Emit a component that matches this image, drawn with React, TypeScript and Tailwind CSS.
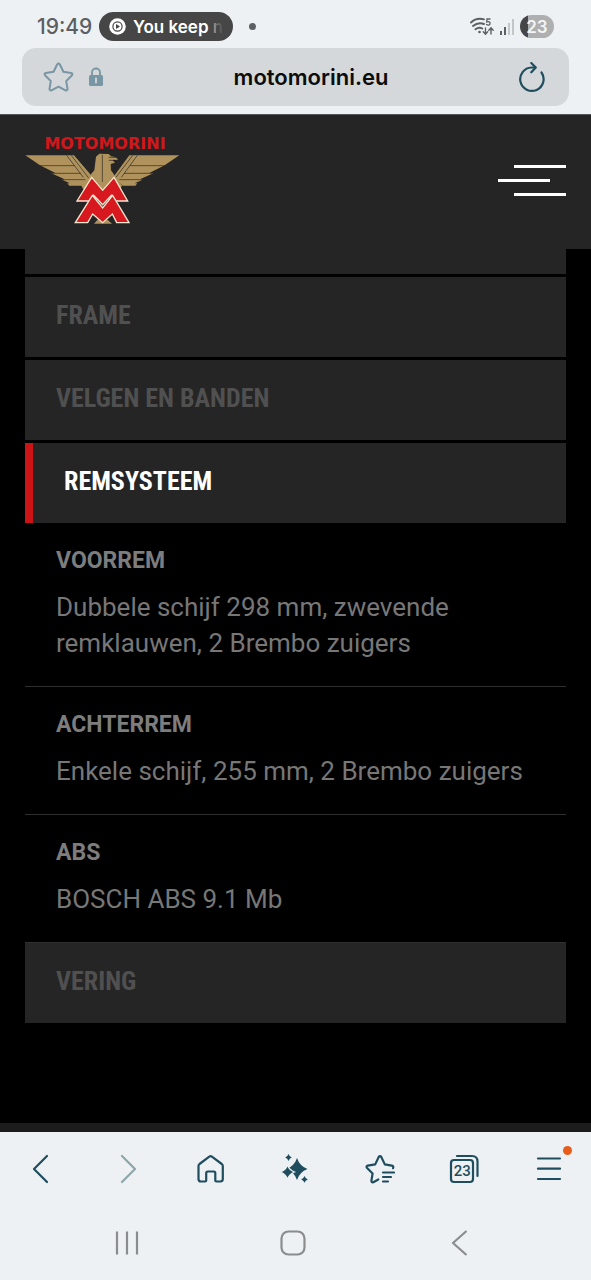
import React, { useState } from 'react';

type Spec = { label: string; value: string };

const BRAKES: Spec[] = [
    { label: 'VOORREM', value: 'Dubbele schijf 298 mm, zwevende remklauwen, 2 Brembo zuigers' },
    { label: 'ACHTERREM', value: 'Enkele schijf, 255 mm, 2 Brembo zuigers' },
    { label: 'ABS', value: 'BOSCH ABS 9.1 Mb' },
];

const SECTIONS: { title: string; specs: Spec[] }[] = [
    { title: 'FRAME', specs: [] },
    { title: 'VELGEN EN BANDEN', specs: [] },
    { title: 'REMSYSTEEM', specs: BRAKES },
    { title: 'VERING', specs: [] },
];

const StatusBar: React.FC = () => (
    <div className="flex h-12 items-center px-[37px] pt-[5px] text-[#5c5f63]">
        <span className="w-[62px] text-[21px] leading-6 font-medium font-['Inter',sans-serif]">19:49</span>
        <div className="flex h-[29px] w-[134px] items-center gap-[7px] rounded-full bg-[#464646] pl-[10px] text-white">
            <svg width="17" height="17" viewBox="0 0 17 17" aria-hidden="true">
                <circle cx="8.5" cy="8.5" r="8.3" fill="#fff" />
                <circle cx="8.5" cy="8.5" r="4.6" fill="none" stroke="#464646" strokeWidth="1.2" />
                <path d="M7 6l4 2.5L7 11z" fill="#464646" />
            </svg>
            <span className="text-[17px] leading-6 font-semibold whitespace-nowrap font-['Inter',sans-serif]">
                You keep <span className="bg-gradient-to-r from-[#999] to-[#4a4a4a] bg-clip-text text-transparent">n</span>
            </span>
        </div>
        <span className="ml-4 h-[7px] w-[7px] rounded-full bg-[#5c5f63]" />
        <div className="ml-auto flex items-center gap-[5px]">
            <svg width="24" height="20" viewBox="0 0 24 20" fill="none" stroke="#5c5f63" strokeLinecap="round" aria-hidden="true">
                <path d="M1 5.5C4 2.500 9 1 14 2.300M3 9c3-2.500 7-3.500 11-2M5.500 12.300c2-1.600 4.500-2 6.800-.8" strokeWidth="1.900" />
                <circle cx="9.500" cy="15" r="1.300" fill="#5c5f63" stroke="none" />
                <path d="M20 2h-3l-.3 3c2-.7 3.600 0 3.400 1.600-.2 1.700-2.300 1.900-3.600.9" strokeWidth="1.300" />
                <path d="M15.500 11v6m-2.200-2.200l2.200 2.400 2.200-2.400M21 17v-6m-2.200 2.200L21 10.800l2.200 2.400" strokeWidth="1.400" />
            </svg>
            <svg width="16" height="17" viewBox="0 0 16 17" aria-hidden="true">
                <path d="M1 13h2v4H1zM5 9h2v8H5z" fill="#5c5f63" />
                <path d="M9 5h2v12H9zM13 1h2v16h-2z" fill="#c3c6c8" />
            </svg>
            <div className="flex h-[23px] w-[34px] items-center justify-center rounded-full bg-gradient-to-r from-[#464646] from-23% to-[#adafb0] to-23% text-[17px] leading-5 font-semibold text-[#f2f4f5] font-['Inter',sans-serif]">
                23
            </div>
        </div>
    </div>
);

const AddressBar: React.FC = () => (
    <div className="mx-[22px] flex h-[58px] items-center rounded-[14px] bg-[#d4d8db] pr-6 pl-[21px]">
        <button type="button" aria-label="Bladwijzer toevoegen">
            <svg width="31" height="30" viewBox="0 0 31 30" fill="none" stroke="#7896a3" strokeWidth="2" strokeLinejoin="round" aria-hidden="true">
                <path d="M14.100 2.500q1.400-2 2.800 0l3.500 7.300 7.600 1.200q2.300.6.800 2.500l-5.600 5.600 1.300 7.700q0 2.200-2 1.500L15.500 24.700l-7 3.600q-2 .7-2-1.500l1.300-7.700-5.600-5.600q-1.500-1.900.8-2.500l7.600-1.200z" />
            </svg>
        </button>
        <svg className="ml-[14px]" width="16" height="20" viewBox="0 0 16 20" aria-hidden="true">
            <path d="M4 9V5.500a4 4 0 018 0V9" fill="none" stroke="#7896a3" strokeWidth="1.800" />
            <rect x="1" y="8" width="14" height="11" rx="1.500" fill="#7896a3" />
            <path d="M8 11.500v4" stroke="#d4d8db" strokeWidth="1.800" strokeLinecap="round" />
        </svg>
        <input
            type="text"
            aria-label="Webadres"
            defaultValue="motomorini.eu"
            className="min-w-0 flex-1 bg-transparent text-center text-[22px] leading-7 font-semibold text-[#0c0c0c] outline-none font-['Inter',sans-serif]"
        />
        <button type="button" aria-label="Vernieuwen">
            <svg width="27" height="31" viewBox="0 0 27 31" fill="none" stroke="#1f4d5e" strokeWidth="2.200" strokeLinecap="round" strokeLinejoin="round" aria-hidden="true">
                <path d="M23.500 10.500A11.700 11.700 0 1 1 13.500 5.500H17" />
                <path d="M13.300 1l4.500 4.500-4.500 4.800" />
            </svg>
        </button>
    </div>
);

const Logo: React.FC = () => (
    <a href="#" aria-label="Moto Morini" className="flex flex-col items-center">
        <span className="text-[16px] leading-[18px] font-bold text-[#d0181c] font-['DejaVu_Sans',sans-serif]">MOTOMORINI</span>
        <svg width="160" height="72" viewBox="45 85 480 216" aria-hidden="true">
            <g fill="#b0935c">
                <path d="M46 92H192L248 157 216 183H178L172 176 180 176 156 165 164 164 124 146 136 145 90 122Z" />
                <path d="M508 92H358L310 157 338 183H376L382 176 374 176 398 165 390 164 430 146 418 145 464 122Z" />
                <path d="M258 96L268 87 296 88 303 95 318 98 324 105 307 106 315 114 302 118 303 137 336 183 312 225H238L214 183 253 137Z" />
                <path d="M276 270L306 297H252Z" />
            </g>
            <g stroke="#252525" strokeWidth="2" fill="none">
                <path d="M170 92L220 158M184 92L236 160M382 92L334 158M368 92L318 158" />
                <path d="M90 123H193M126 146H212M158 165H226M464 123H360M428 146H342M396 165H328" />
                <path d="M277 90V172M296 98H320M296 107H314" />
            </g>
            {/* two stacked chevron shapes of the emblem */}
            <g fill="#d8181f" stroke="#f6e7d0" strokeWidth="4" strokeLinejoin="miter">
                <path d="M245 158L278 197 312 158 353 229H316L304 212 278 240 251 212 238 229H201Z" />
                <path d="M247 212L278 250 308 212 357 294H320L307 268 278 294 248 268 233 294H196Z" />
            </g>
        </svg>
    </a>
);

const SiteHeader: React.FC = () => (
    <header className="flex h-[135px] items-start justify-between border-t border-[#555] bg-[#252525] px-[25px] pt-5">
        <Logo />
        <button type="button" aria-label="Menu" className="mt-[30px] flex w-[68px] flex-col gap-[11px]">
            <span className="h-[3px] w-[52px] self-end bg-white" />
            <span className="h-[3px] w-[52px] bg-white" />
            <span className="h-[3px] w-[52px] self-end bg-white" />
        </button>
    </header>
);

const SpecList: React.FC<{ specs: Spec[] }> = ({ specs }) => (
    <dl className="font-['Roboto',sans-serif] text-[#7d7d7d]">
        {specs.map(spec => (
            <div key={spec.label} className="border-b border-[#303030] px-[31px] pt-5 pb-[25px]">
                <dt className="mb-[10px] text-[23px] leading-9 font-bold">{spec.label}</dt>
                <dd className="text-[26px] leading-9 text-[#777]">{spec.value}</dd>
            </div>
        ))}
    </dl>
);

const SpecAccordion: React.FC = () => {
    const [open, setOpen] = useState('REMSYSTEEM');

    return (
        <main className="flex-1 bg-black px-[25px] pb-[100px]">
            <div className="h-[25px] bg-[#252525]" />
            {SECTIONS.map((section, index) => {
                const isOpen = section.title === open;
                const afterOpen = index > 0 && SECTIONS[index - 1].title === open;

                return (
                    <section key={section.title} className={afterOpen ? '' : 'pt-[3px]'}>
                        <button
                            type="button"
                            aria-expanded={isOpen}
                            onClick={() => setOpen(isOpen ? '' : section.title)}
                            className={`flex h-20 w-full items-center bg-[#252525] pb-1 pl-[31px] text-left text-[26px] leading-9 font-bold font-['Roboto_Condensed',sans-serif] ${
                                isOpen ? 'border-l-8 border-[#cc1417] text-white' : 'text-[#505050]'
                            }`}
                        >
                            {section.title}
                        </button>
                        {isOpen && <SpecList specs={section.specs} />}
                    </section>
                );
            })}
        </main>
    );
};

const BrowserToolbar: React.FC = () => (
    <nav aria-label="Browser" className="grid h-[74px] grid-cols-7 items-center justify-items-center text-[#1f4d5e]">
        <button type="button" aria-label="Terug">
            <svg width="30" height="30" viewBox="0 0 30 30" fill="none" stroke="currentColor" strokeWidth="2.200" strokeLinecap="round" strokeLinejoin="round">
                <path d="M20 2L7 15l13 13" />
            </svg>
        </button>
        <button type="button" aria-label="Vooruit">
            <svg width="30" height="30" viewBox="0 0 30 30" fill="none" stroke="#8ea5a9" strokeWidth="2.200" strokeLinecap="round" strokeLinejoin="round">
                <path d="M10 2l13 13-13 13" />
            </svg>
        </button>
        <button type="button" aria-label="Startpagina">
            <svg width="30" height="30" viewBox="0 0 30 30" fill="none" stroke="currentColor" strokeWidth="2.200" strokeLinejoin="round">
                <path d="M2.500 12q0-1.200 1-2L13.300 2.600q1.300-.9 2.600 0L25.800 10q1 .8 1 2v13q0 2.500-2.500 2.500h-4q-1 0-1-1V19q0-1.500-1.500-1.500h-6Q10.200 17.500 10.200 19v7.500q0 1-1 1H5q-2.500 0-2.500-2.500z" />
            </svg>
        </button>
        <button type="button" aria-label="AI-assistent">
            <svg width="30" height="30" viewBox="0 0 30 30" fill="currentColor">
                <path d="M17 4q2.600 8 10.500 11-7.900 3-10.500 11-2.600-8-10.500-11Q14.400 12 17 4z" />
                <path d="M7.500 11q1.700 5 7 7-5.300 2-7 7-1.700-5-7-7 5.300-2 7-7z" stroke="#edf1f4" strokeWidth="1.200" />
                <path d="M8.500 0q.9 2.600 3.300 3.500-2.400.9-3.300 3.500-.9-2.600-3.300-3.500Q7.600 2.600 8.500 0zM24.500 22q.9 2.500 3.300 3.400-2.400.9-3.300 3.400-.9-2.500-3.300-3.400 2.400-.9 3.300-3.400z" />
            </svg>
        </button>
        <button type="button" aria-label="Bladwijzers">
            <svg width="30" height="30" viewBox="0 0 30 30" fill="none" stroke="currentColor" strokeWidth="2.200" strokeLinecap="round" strokeLinejoin="round">
                <path d="M28 14.200q1-2-1.200-2.600l-7-1.200L16.300 3q-1.300-1.800-2.600 0l-3.500 7.400-7.500 1.200q-2 .7-.6 2.400l5.500 5.500-1.200 7.300q0 2 1.900 1.500l5-2.800" />
                <path d="M18 18.500h11M18 23h8M18 27.500h5" />
            </svg>
        </button>
        <button type="button" aria-label="Tabbladen" className="relative">
            <svg width="30" height="30" viewBox="0 0 30 30" fill="none" stroke="currentColor" strokeWidth="2.200" strokeLinecap="round">
                <rect x="2" y="6" width="22" height="22" rx="3" />
                <path d="M8 2h15q5.500 0 5.500 5.500V22" />
            </svg>
            <span className="absolute top-[9px] left-[2px] w-[22px] text-center text-[15px] leading-4 font-medium font-['Roboto',sans-serif]">23</span>
        </button>
        <button type="button" aria-label="Menu" className="relative">
            <svg width="30" height="30" viewBox="0 0 30 30" fill="none" stroke="currentColor" strokeWidth="2.200" strokeLinecap="round">
                <path d="M4 4.500h22M4 14.700h22M4 25h22" />
            </svg>
            <span className="absolute -top-2 -right-2 h-[9px] w-[9px] rounded-full bg-[#e85d1a]" />
        </button>
    </nav>
);

const SystemNav: React.FC = () => (
    <nav aria-label="Systeem" className="grid h-[74px] grid-cols-3 items-center justify-items-center pr-12 pl-11 text-[#8a8c8e]">
        <button type="button" aria-label="Recente apps">
            <svg width="26" height="26" viewBox="0 0 26 26" stroke="currentColor" strokeWidth="2.200">
                <path d="M3 1.500v23M13 1.500v23M23 1.500v23" />
            </svg>
        </button>
        <button type="button" aria-label="Start">
            <svg width="26" height="26" viewBox="0 0 26 26" fill="none" stroke="currentColor" strokeWidth="2.200">
                <rect x="1.500" y="1.500" width="23" height="23" rx="7" />
            </svg>
        </button>
        <button type="button" aria-label="Terug">
            <svg width="26" height="26" viewBox="0 0 26 26" fill="none" stroke="currentColor" strokeWidth="2.200" strokeLinejoin="round">
                <path d="M19.500 1L6 13l13.500 12" />
            </svg>
        </button>
    </nav>
);

export default function App() {
    return (
        <div className="flex min-h-screen flex-col bg-[#edf1f4]">
            <div className="pb-2">
                <StatusBar />
                <AddressBar />
            </div>
            <SiteHeader />
            <SpecAccordion />
            <div className="h-[9px] bg-[#1c1c1c]" />
            <BrowserToolbar />
            <SystemNav />
        </div>
    );
}
